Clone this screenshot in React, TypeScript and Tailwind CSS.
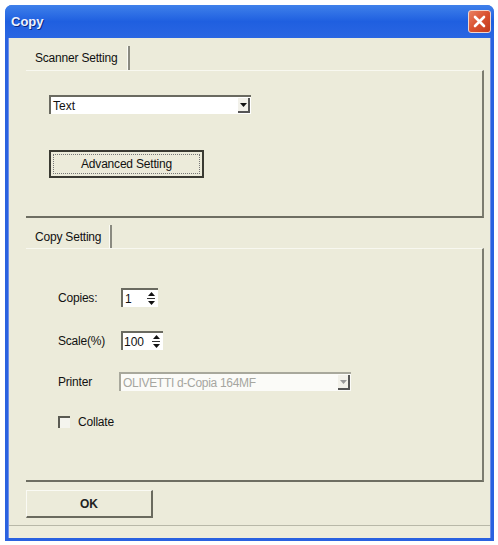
import React from "react";

const font = { fontFamily: '"Liberation Sans", Arial, sans-serif' };

function DropArrow({ disabled }: { disabled?: boolean }) {
  return (
    <div className="flex h-[15px] w-[12px] items-center justify-center border-r-2 border-b-2 border-[#555] bg-[#f2f1ea]">
      <svg width="7" height="4" viewBox="0 0 7 4">
        <path d="M0 0 H7 L3.5 4 Z" fill={disabled ? "#999" : "#111"} />
      </svg>
    </div>
  );
}

function Spin() {
  return (
    <div className="flex w-[10px] flex-col items-center justify-center gap-[2px]">
      <svg width="7" height="4" viewBox="0 0 7 4">
        <path d="M0 4 H7 L3.5 0 Z" fill="#111" />
      </svg>
      <div className="h-[1px] w-[8px] bg-[#333]" />
      <svg width="7" height="4" viewBox="0 0 7 4">
        <path d="M0 0 H7 L3.5 4 Z" fill="#111" />
      </svg>
    </div>
  );
}

function Tab({ label, cls }: { label: string; cls: string }) {
  return (
    <div className={`flex shrink-0 items-center ${cls}`}>
      <span className="pl-[9px] text-[12px] tracking-[-0.2px] text-[#111]">{label}</span>
      <div className="ml-auto flex h-full">
        <div className="w-[1px] bg-[#fbfbf5]" />
        <div className="w-[2px] bg-[#8a8a80]" />
      </div>
    </div>
  );
}

export default function App() {
  return (
    <div className="h-[545px] w-[498px] bg-white pt-[5px] pr-[4px] pb-[4px] pl-[5px]" style={font}>
      <div className="flex h-full flex-col overflow-hidden rounded-t-[7px] bg-[#2a62e0]">
        {/* Title bar */}
        <div className="flex h-[33px] shrink-0 items-center bg-gradient-to-b from-[#3f80ea] via-[#1f5fe0] to-[#2a66e2] pl-[6px] pr-[3px]">
          <span className="text-[13px] font-bold text-[#eef2ff] [text-shadow:1px_1px_0_#0a2a80]">Copy</span>
          <div className="ml-auto flex h-[23px] w-[23px] items-center justify-center rounded-[3px] border border-[#f2d6cc] bg-gradient-to-br from-[#e98062] via-[#d9512f] to-[#c23a1c]">
            <svg width="13" height="13" viewBox="0 0 13 13">
              <path d="M2 2 L11 11 M11 2 L2 11" stroke="#fff" strokeWidth="2.6" strokeLinecap="round" />
            </svg>
          </div>
        </div>
        {/* Body */}
        <div className="mx-[3px] mb-[3px] flex min-h-0 flex-1 flex-col border-l border-r border-[#6f8fe8] bg-[#ecebda]">
          <div className="flex flex-1 flex-col pl-[17px] pr-[6px] pt-[8px]">
            <Tab label="Scanner Setting" cls="h-[24px] w-[104px]" />
            <div className="flex h-[148px] shrink-0 flex-col border-t border-t-[#f8f8f0] border-r-2 border-r-[#7c7c70] border-b-2 border-b-[#6e6e62] pl-[23px] pt-[24px]">
              <div className="flex h-[19px] w-[202px] items-center border-t-2 border-l-2 border-t-[#6a6a60] border-l-[#6a6a60] bg-white pr-[1px]">
                <span className="pl-[2px] text-[12px] text-[#111]">Text</span>
                <div className="ml-auto">
                  <DropArrow />
                </div>
              </div>
              <div className="mt-[36px] flex h-[28px] w-[155px] items-center justify-center border-2 border-[#3a3a32] p-[2px]">
                <div className="flex h-full w-full items-center justify-center border border-dotted border-[#777]">
                  <span className="text-[12px] tracking-[-0.2px] text-[#111]">Advanced Setting</span>
                </div>
              </div>
            </div>
            <div className="mt-[7px]">
              <Tab label="Copy Setting" cls="h-[23px] w-[86px]" />
            </div>
            <div className="flex h-[234px] shrink-0 flex-col border-t border-t-[#f8f8f0] border-r-2 border-r-[#7c7c70] border-b-2 border-b-[#6e6e62] pl-[32px] pt-[39px]">
              <div className="flex h-[19px] items-center">
                <span className="w-[63px] text-[12px] tracking-[-0.2px] text-[#111]">Copies:</span>
                <div className="flex h-[19px] w-[37px] items-center border-t-2 border-l-2 border-[#6a6a60] bg-white pr-[2px]">
                  <span className="pl-[2px] text-[12px] text-[#111]">1</span>
                  <div className="ml-auto">
                    <Spin />
                  </div>
                </div>
              </div>
              <div className="mt-[24px] flex h-[19px] items-center">
                <span className="w-[63px] text-[12px] tracking-[-0.2px] text-[#111]">Scale(%)</span>
                <div className="flex h-[19px] w-[42px] items-center border-t-2 border-l-2 border-[#6a6a60] bg-white pr-[2px]">
                  <span className="pl-[1px] text-[12px] text-[#111]">100</span>
                  <div className="ml-auto">
                    <Spin />
                  </div>
                </div>
              </div>
              <div className="mt-[22px] flex h-[19px] items-center">
                <span className="w-[61px] text-[12px] tracking-[-0.2px] text-[#111]">Printer</span>
                <div className="flex h-[19px] w-[232px] items-center border-t-2 border-l-2 border-[#a8a89c] bg-[#fbfbf8] pr-[1px]">
                  <span className="pl-[2px] text-[12px] tracking-[-0.3px] text-[#a6a6a0]">OLIVETTI d-Copia 164MF</span>
                  <div className="ml-auto">
                    <DropArrow disabled />
                  </div>
                </div>
              </div>
              <div className="mt-[22px] flex items-center">
                <div className="h-[12px] w-[12px] border-t-2 border-l-2 border-[#5a5a52] bg-[#f4f4ee]" />
                <span className="ml-[8px] text-[12px] tracking-[-0.2px] text-[#111]">Collate</span>
              </div>
            </div>
            <div className="mt-[8px] flex h-[28px] w-[127px] shrink-0 items-center justify-center border-t border-l border-t-[#fafaf4] border-l-[#fafaf4] border-r-2 border-b-2 border-r-[#6a6a5e] border-b-[#6a6a5e]">
              <span className="text-[12px] font-bold text-[#222]">OK</span>
            </div>
          </div>
          <div className="h-[13px] shrink-0 border-t border-t-[#b8b8a8] bg-[#eeeddc]" />
        </div>
      </div>
    </div>
  );
}
